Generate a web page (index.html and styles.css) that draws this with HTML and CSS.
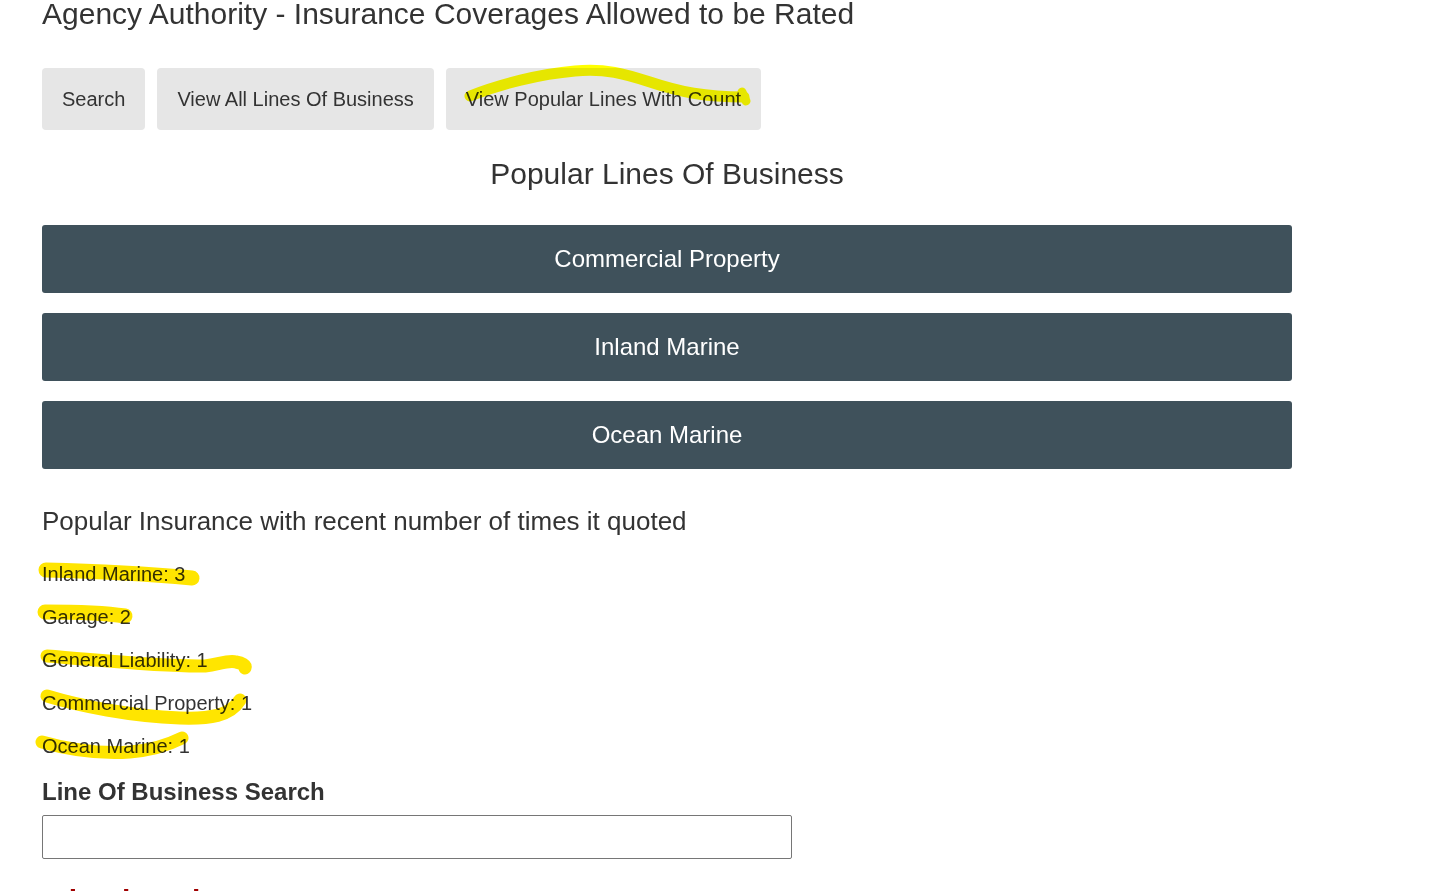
FILE: index.html
```html
<!DOCTYPE html>
<html lang="en">
<head>
<meta charset="utf-8">
<title>Agency Authority</title>
<link rel="stylesheet" href="styles.css">
</head>
<body>
<div class="page">
  <h1 class="title">Agency Authority - Insurance Coverages Allowed to be Rated</h1>
  <div class="tabs">
    <button class="tab">Search</button>
    <button class="tab">View All Lines Of Business</button>
    <button class="tab">View Popular Lines With Count</button>
  </div>
  <h2 class="section-title">Popular Lines Of Business</h2>
  <div class="bars">
    <button class="bar">Commercial Property</button>
    <button class="bar">Inland Marine</button>
    <button class="bar">Ocean Marine</button>
  </div>
  <h3 class="sub-title">Popular Insurance with recent number of times it quoted</h3>
  <ul class="counts">
    <li>Inland Marine: 3</li>
    <li>Garage: 2</li>
    <li>General Liability: 1</li>
    <li>Commercial Property: 1</li>
    <li>Ocean Marine: 1</li>
  </ul>
  <label class="search-label" for="lob">Line Of Business Search</label>
  <input class="search-input" id="lob" type="text">
  <div class="result">Inland Marine</div>
</div>
<svg class="marker" width="1456" height="891" viewBox="0 0 1456 891" aria-hidden="true">
  <g fill="none" stroke-linecap="round" stroke-linejoin="round">
    <path stroke="#ffff00" stroke-width="11" d="M470 96 C500 84 540 74 575 71 C605 68 625 74 650 82 C680 92 705 97 744 97"/>
    <path stroke="#ffff00" stroke-width="9" d="M742 92 L746 101"/>
    <g stroke="#ffe500">
      <path stroke-width="15" d="M46 570 C90 571 150 574 192 578"/>
      <path stroke-width="15" d="M45 612 C75 612 105 613 125 616"/>
      <path stroke-width="13" d="M47 656 C100 660 160 667 205 666 C220 664 228 660 236 662 C242 663 246 665 245 668"/>
      <path stroke-width="13" d="M47 696 C80 706 130 716 180 718 C210 719 230 716 240 700"/>
      <path stroke-width="13" d="M42 742 C70 750 100 754 130 752 C155 750 170 744 182 738"/>
    </g>
  </g>
</svg>
</body>
</html>
```

FILE: styles.css
```css
html, body {
  margin: 0;
  padding: 0;
  background: #ffffff;
  overflow: hidden;
}

body {
  font-family: "Liberation Sans", Arial, sans-serif;
  color: #333333;
  height: 891px;
  position: relative;
}

.page {
  width: 1250px;
  padding-left: 42px;
  display: flex;
  flex-direction: column;
  align-items: flex-start;
}

.title {
  margin: -3px 0 0 0;
  font-size: 30px;
  font-weight: 400;
  line-height: 33px;
}

.tabs {
  display: flex;
  gap: 12px;
  margin-top: 38px;
}

.tab {
  height: 62px;
  padding: 0 20px;
  border: 0;
  border-radius: 4px;
  background: #e6e6e6;
  color: #333333;
  font-family: inherit;
  font-size: 20px;
}

.section-title {
  align-self: stretch;
  text-align: center;
  margin: 24px 0 0 0;
  font-size: 30px;
  font-weight: 400;
  line-height: 40px;
}

.bars {
  align-self: stretch;
  display: flex;
  flex-direction: column;
  gap: 20px;
  margin-top: 31px;
}

.bar {
  height: 68px;
  border: 0;
  border-radius: 3px;
  background: #3f515b;
  color: #ffffff;
  font-family: inherit;
  font-size: 24px;
}

.sub-title {
  margin: 36px 0 0 0;
  font-size: 26px;
  font-weight: 400;
  line-height: 32px;
}

.counts {
  list-style: none;
  margin: 26px 0 0 0;
  padding: 0;
  font-size: 20px;
  line-height: 23px;
  display: flex;
  flex-direction: column;
  gap: 20px;
}

.search-label {
  margin-top: 20px;
  font-size: 24px;
  font-weight: 700;
  line-height: 28px;
  color: #333333;
}

.search-input {
  margin-top: 9px;
  width: 750px;
  height: 44px;
  box-sizing: border-box;
  border: 1px solid #767676;
  border-radius: 2px;
  font-family: inherit;
  font-size: 20px;
  padding: 0 8px;
}

.result {
  margin-top: 24px;
  font-size: 30px;
  font-weight: 700;
  color: #a00000;
  line-height: 36px;
}

.marker {
  position: absolute;
  left: 0;
  top: 0;
  pointer-events: none;
  mix-blend-mode: multiply;
}
```
